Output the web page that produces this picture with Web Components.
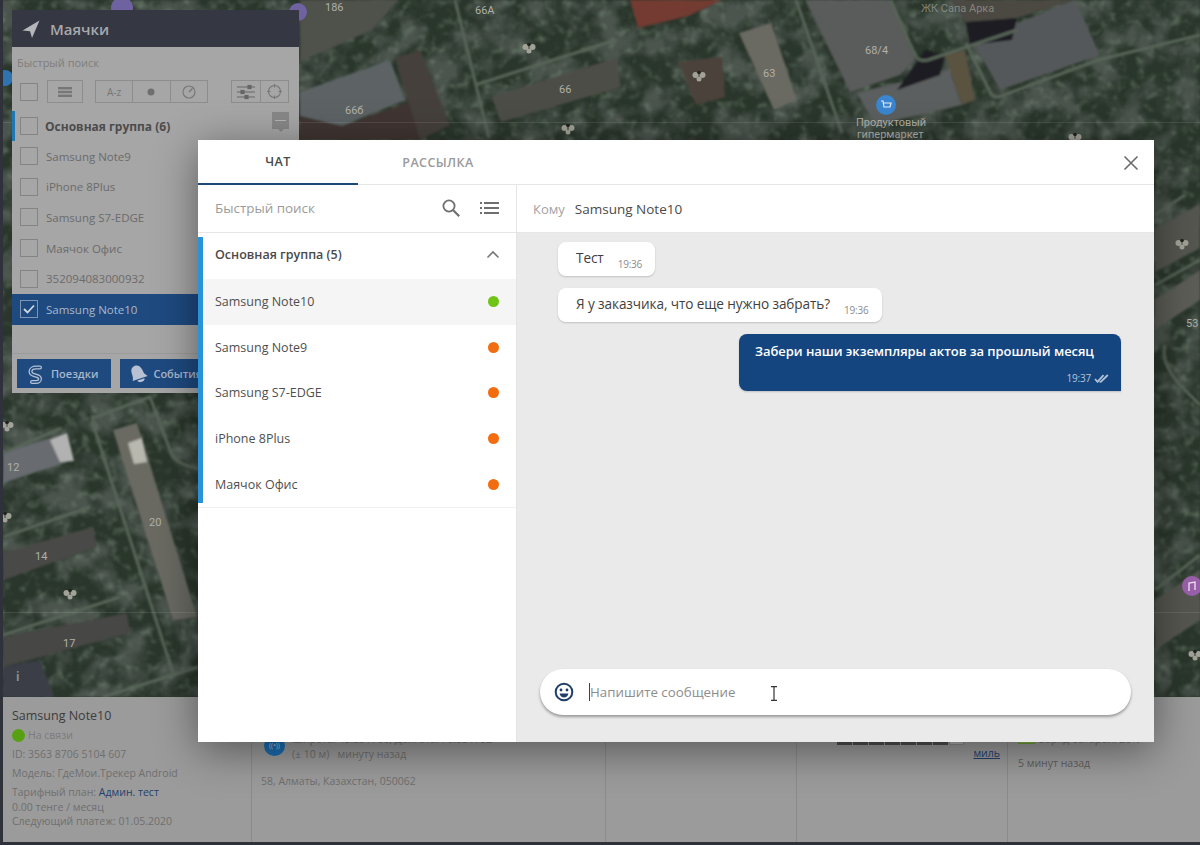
<!DOCTYPE html>
<html lang="ru">
<head>
<meta charset="utf-8">
<title>Маячки</title>
<style>
  html, body { margin: 0; padding: 0; height: 100%; background: #2f323b; overflow: hidden; }
  body { font-family: "Open Sans", "Liberation Sans", sans-serif; }
</style>
</head>
<body>
<tracker-app>
  <map-view slot="map"></map-view>
  <beacon-panel slot="map"></beacon-panel>
  <info-bar slot="info"></info-bar>
  <chat-dialog slot="dialog"></chat-dialog>
</tracker-app>

<script>
// shared icon strokes
const ICONS = {
  search: '<svg width="20" height="20" viewBox="0 0 20 20" fill="none" stroke="#6f6f6f" stroke-width="1.8"><circle cx="8" cy="8" r="5.6"/><path d="M12.2 12.2l6 6" stroke-width="2.2"/></svg>',
  list: '<svg width="20" height="14" viewBox="0 0 20 14" fill="#6f6f6f"><rect x="0" y="1" width="2" height="2"/><rect x="4" y="1" width="15" height="2"/><rect x="0" y="6" width="2" height="2"/><rect x="4" y="6" width="15" height="2"/><rect x="0" y="11" width="2" height="2"/><rect x="4" y="11" width="15" height="2"/></svg>',
  chevron: '<svg width="14" height="9" viewBox="0 0 14 9" fill="none" stroke="#777" stroke-width="1.6"><path d="M1.5 7.5L7 2l5.500 5.500"/></svg>',
  close: '<svg width="16" height="16" viewBox="0 0 16 16" fill="none" stroke="#6a6a6a" stroke-width="1.6"><path d="M1.500 1.500l13 13M14.500 1.500l-13 13"/></svg>',
  smile: '<svg width="20" height="20" viewBox="0 0 20 20"><circle cx="10" cy="10" r="8.300" fill="none" stroke="#1f3f68" stroke-width="2"/><circle cx="7" cy="8" r="1.400" fill="#1f3f68"/><circle cx="13" cy="8" r="1.400" fill="#1f3f68"/><path d="M5.600 11.500h8.800c-.5 2.600-2.300 4-4.400 4s-3.900-1.400-4.400-4z" fill="#1f3f68"/></svg>',
  ticks: '<svg width="15" height="9" viewBox="0 0 15 9" fill="none" stroke="#b0c1d8" stroke-width="1.800"><path d="M1 5l2.500 2.800L9.500 1.200"/><path d="M5.500 7.800L7 7.600 13.800 1"/></svg>'
};

class MapView extends HTMLElement {
  constructor() {
    super();
    this.attachShadow({ mode: 'open' });
    // satellite picture: a free canvas, so plain svg coordinates
    const marks = [[529,47],[699,75],[568,128],[7,425],[70,593],[1182,243],[1195,654],[1075,137],[5,516]];
    const marker = marks.map(m => `<g transform="translate(${m[0]},${m[1]})" fill="#a2a298"><circle cx="-3.500" cy="0" r="3"/><circle cx="3.500" cy="0" r="3"/><circle cx="0" cy="4" r="2.500"/><circle cx="0" cy="-2.500" r="1.800" fill="#20241f"/></g>`).join('');
    this.shadowRoot.innerHTML = `
      <style>
        :host { display: block; position: absolute; inset: 0; }
        svg { display: block; width: 100%; height: 100%; }
        text { font-family: Roboto, "Liberation Sans", sans-serif; font-size: 11px; fill: #b0b0a8; }
      </style>
      <svg viewBox="0 0 1197 697" preserveAspectRatio="none">
        <defs>
          <filter id="trees" x="0" y="0" width="100%" height="100%">
            <feTurbulence type="fractalNoise" baseFrequency=".035" numOctaves="4" seed="11"/>
            <feColorMatrix values="0 0 0 0 .07  0 0 0 0 .09  0 0 0 0 .075  3.500 0 0 0 -1.400"/>
            <feGaussianBlur stdDeviation="1"/>
          </filter>
          <filter id="leaves" x="0" y="0" width="100%" height="100%">
            <feTurbulence type="fractalNoise" baseFrequency=".11" numOctaves="3" seed="4"/>
            <feColorMatrix values="0 0 0 0 .21  0 0 0 0 .28  0 0 0 0 .21  0 1.500 0 0 -.800"/>
            <feGaussianBlur stdDeviation=".9"/>
          </filter>
          <filter id="blur"><feGaussianBlur stdDeviation=".8"/></filter>
        </defs>
        <g transform="translate(-3,0)">
          <rect x="0" width="1200" height="697" fill="#2a362b"/>
          <rect x="0" width="1200" height="697" filter="url(#trees)"/>
          <rect x="0" width="1200" height="697" filter="url(#leaves)"/>
          <g filter="url(#blur)">
            <!-- blocks and roofs -->
            <polygon points="300,0 398,0 372,30 300,62" fill="#50514c"/>
            <polygon points="630,0 722,0 688,16 638,28" fill="#733a31"/>
            <polygon points="300,92 390,60 405,100 342,126 300,116" fill="#5d6365"/>
            <polygon points="300,116 342,126 415,100 420,140 300,140" fill="#403530"/>
            <polygon points="395,58 420,50 450,125 420,140" fill="#44403a"/>
            <polygon points="492,97 616,58 621,87 501,122" fill="#4e4d47"/>
            <polygon points="679,62 722,57 725,97 696,105" fill="#4c423b"/>
            <polygon points="739,33 771,23 797,100 774,110" fill="#6b6b63"/>
            <polygon points="805,0 891,0 915,60 900,75 850,92" fill="#5a5c5c"/>
            <polygon points="857,93 949,70 962,105 875,125" fill="#5c5e5e"/>
            <polygon points="1000,30 1075,0 1100,55 1000,90 975,45" fill="#55585a"/>
            <polygon points="950,0 1075,0 1017,18 966,22" fill="#4c4942"/>
            <polygon points="945,55 965,50 975,100 962,105" fill="#5a5240"/>
            <polygon points="897,90 925,50 945,55 940,75" fill="#1b1f22"/>
            <polygon points="966,22 1017,18 1012,40 970,45" fill="#1b1f22"/>
            <polygon points="1155,229 1200,204 1200,248 1155,272" fill="#54564f"/>
            <polygon points="1155,300 1200,270 1200,300 1155,330" fill="#5c5d56"/>
            <polygon points="1155,600 1200,570 1200,620 1155,650" fill="#55564f"/>
            <polygon points="3,453 67,433 73,460 3,483" fill="#676c71"/>
            <polygon points="50,440 67,433 74,461 60,462" fill="#b2b2b2"/>
            <polygon points="113,430 137,423 197,617 173,620" fill="#6a6b64"/>
            <polygon points="128,443 142,438 147,462 134,464" fill="#b8b8af"/>
            <polygon points="3,553 93,527 97,547 3,580" fill="#484846"/>
            <polygon points="3,637 127,613 130,633 3,667" fill="#464644"/>
            <polygon points="3,667 40,660 54,697 3,697" fill="#3a3e46"/>
            <!-- roads -->
            <g fill="none" stroke="#596558" stroke-width="3">
              <path d="M455 0L489 138"/>
              <path d="M475 85L616 40"/>
              <path d="M796 0L842 133"/>
              <path d="M891 0L915 55Q918 62 928 60L1017 30"/>
              <path d="M966 43L990 92Q994 100 1004 95L1098 60 1200 35"/>
              <path d="M93 415Q92 418 95 430L173 673"/>
              <path d="M93 418L150 397 170 450Q175 465 197 468"/>
              <path d="M3 453L62 428"/>
              <path d="M3 537L90 507"/>
              <path d="M3 635L120 597"/>
              <path d="M103 697L198 667"/>
              <path d="M1155 215L1185 195"/>
              <path d="M1155 285L1200 260"/>
              <path d="M1155 590L1200 555"/>
              <path d="M1165 345Q1160 362 1180 385L1200 405"/>
            </g>
          </g>
          <g stroke="#ffffff" stroke-opacity=".1"><path d="M0 122.500H1200M0 612.500H1200"/></g>
          ${marker}
          <circle cx="122" cy="8" r="11" fill="#6f62a0"/>
          <circle cx="298" cy="12" r="9" fill="#6f62a0"/>
          <circle cx="5" cy="78" r="8" fill="#2f74b0"/>
          <circle cx="886" cy="105" r="10" fill="#3a86d0"/>
          <path d="M881 101h2l1 6h6l1-4h-7" fill="none" stroke="#e6eef8" stroke-width="1.200"/>
          <circle cx="1192" cy="586" r="10" fill="#9a60ab"/>
          <path d="M1189 591v-8l6-1v8" fill="none" stroke="#eedcf2" stroke-width="1.400"/>
          <text x="325" y="11">186</text>
          <text x="475" y="14">66А</text>
          <text x="559" y="93">66</text>
          <text x="345" y="114">66б</text>
          <text x="763" y="77">63</text>
          <text x="865" y="54">68/4</text>
          <text x="921" y="12" fill-opacity=".6">ЖК Сапа Арка</text>
          <text x="856" y="126">Продуктовый</text>
          <text x="857" y="138">гипермаркет</text>
          <text x="7" y="471">12</text>
          <text x="35" y="560">14</text>
          <text x="63" y="647">17</text>
          <text x="149" y="526">20</text>
          <text x="1186" y="327">53</text>
          <text x="16" y="681" fill-opacity=".7" style="font-weight:700;font-size:13px">i</text>
        </g>
      </svg>
    `;
  }
}
customElements.define('map-view', MapView);

class BeaconRow extends HTMLElement {
  constructor() {
    super();
    this.attachShadow({ mode: 'open' });
    this.shadowRoot.innerHTML = `
      <style>
        :host { display: flex; align-items: center; height: 30.600px; padding-left: 8px; color: #6b6b6b; font-size: 11.500px; }
        :host([group]) { color: #4c4c4c; font-weight: 700; font-size: 12px; box-shadow: inset 3px 0 #1f78b4; height: 30px; }
        :host([selected]) { background: #1e4a80; color: #a9b8cc; }
        .box { width: 16px; height: 16px; border: 1px solid #848484; margin-right: 8px; flex: none; display: flex; align-items: center; justify-content: center; }
        :host([group]) .box { margin-right: 7px; }
        :host([selected]) .box { border-color: #7f95b5; }
      </style>
      <span class="box"></span><slot></slot>
    `;
    if (this.hasAttribute('selected')) {
      this.shadowRoot.querySelector('.box').innerHTML = '<svg width="12" height="10" viewBox="0 0 12 10" fill="none" stroke="#d0d8e2" stroke-width="1.800"><path d="M1 5l3.500 3.500L11 1.500"/></svg>';
    }
  }
}
customElements.define('beacon-row', BeaconRow);

class BeaconPanel extends HTMLElement {
  constructor() {
    super();
    this.attachShadow({ mode: 'open' });
    this.shadowRoot.innerHTML = `
      <style>
        :host { display: flex; flex-direction: column; position: absolute; left: 9px; top: 10px; width: 287px; height: 383px; background: #a6a6a6; color: #6b6b6b; font-family: "Open Sans", "Liberation Sans", sans-serif; }
        header { display: flex; align-items: center; gap: 10px; height: 37px; padding-left: 10px; background: #353842; color: #a8a9ad; font-size: 15px; font-weight: 600; flex: none; }
        .search { padding: 8px 5px 0; height: 25px; font-size: 11px; color: #7e7e7e; box-sizing: border-box; flex: none; }
        .tools { display: flex; align-items: center; height: 25px; padding: 7px 10px 0 8px; flex: none; }
        .check { width: 16px; height: 16px; border: 1px solid #848484; margin-right: 9px; }
        .grp { display: flex; height: 21px; border: 1px solid #8d8d8d; }
        .grp span { display: flex; align-items: center; justify-content: center; width: 36.300px; border-left: 1px solid #8d8d8d; font-size: 10px; color: #777; }
        .grp span:first-child { border-left: 0; }
        .rows { flex: 1; padding-top: 7px; position: relative; }
        .tag { position: absolute; right: 10px; top: 8px; width: 17px; height: 17px; background: #888; }
        .tag::after { content: ""; position: absolute; left: 6px; top: 17px; border: 3px solid transparent; border-top-color: #888; }
        .tag::before { content: ""; position: absolute; left: 3px; right: 3px; top: 8px; height: 1px; background: #b5b5b5; }
        footer { display: flex; gap: 9px; height: 40px; padding: 5px 5px 0; box-sizing: border-box; border-top: 1px solid #9b9b9b; flex: none; overflow: hidden; }
        .btn { display: flex; align-items: center; gap: 5px; height: 29px; padding: 0 13px 0 9px; background: #1e4a80; color: #a9b8cc; font-size: 11px; font-weight: 600; white-space: nowrap; flex: none; }
        .bell { transform: rotate(-18deg); }
      </style>
      <header>
        <svg width="18" height="18" viewBox="0 0 18 18" fill="#b5b6ba"><path d="M17.500 .5L.5 10.500l7.500 0.800L10 18z"/></svg>
        Маячки
      </header>
      <div class="search">Быстрый поиск</div>
      <div class="tools">
        <span class="check"></span>
        <div class="grp"><span style="width:34px"><svg width="14" height="10" viewBox="0 0 14 10" fill="#777"><rect width="14" height="2.400"/><rect y="3.800" width="14" height="2.400"/><rect y="7.600" width="14" height="2.400"/></svg></span></div>
        <div class="grp" style="margin-left:12px"><span>A-z</span><span><svg width="8" height="8"><circle cx="4" cy="4" r="3.500" fill="#6f6f6f"/></svg></span><span><svg width="14" height="14" viewBox="0 0 14 14" fill="none" stroke="#777" stroke-width="1.100"><circle cx="7" cy="7" r="6"/><path d="M7 7l3.500-3.500" stroke-width="1.500"/></svg></span></div>
        <div class="grp" style="margin-left:auto"><span style="width:28px"><svg width="18" height="16" viewBox="0 0 18 16" fill="none" stroke="#666" stroke-width="1.200"><path d="M0 3h18M0 8h18M0 13h18"/><rect x="11" y="1.500" width="3" height="3" fill="#666"/><rect x="4" y="6.500" width="3" height="3" fill="#666"/><rect x="8" y="11.500" width="3" height="3" fill="#666"/></svg></span><span style="width:27px"><svg width="15" height="15" viewBox="0 0 15 15" fill="none" stroke="#777" stroke-width="1.100"><circle cx="7.500" cy="7.500" r="6"/><path d="M7.500 0v3.500M7.500 11.500V15M0 7.500h3.500M11.500 7.500H15"/></svg></span></div>
      </div>
      <div class="rows">
        <beacon-row group>Основная группа (6)</beacon-row>
        <span class="tag"></span>
        <beacon-row>Samsung Note9</beacon-row>
        <beacon-row>iPhone 8Plus</beacon-row>
        <beacon-row>Samsung S7-EDGE</beacon-row>
        <beacon-row>Маячок Офис</beacon-row>
        <beacon-row>352094083000932</beacon-row>
        <beacon-row selected>Samsung Note10</beacon-row>
      </div>
      <footer>
        <div class="btn"><svg width="20" height="20" viewBox="0 0 20 20" fill="none" stroke-linecap="round"><path d="M14 3.500h-4C7 3.500 4.500 5 4.500 7.500S7 11 9.500 11.500s4.500 1.500 4.500 3.500-2 3-4 3H6" stroke="#b6c2d3" stroke-width="4"/><path d="M14 3.500h-4C7 3.500 4.500 5 4.500 7.500S7 11 9.500 11.500s4.500 1.500 4.500 3.500-2 3-4 3H6" stroke="#1e4a80" stroke-width="1.500"/></svg>Поездки</div>
        <div class="btn"><svg class="bell" width="19" height="19" viewBox="0 0 18 18" fill="#b6c2d3"><path d="M8 1c3 0 5 2.500 5.500 5.500l.5 4 2.500 3.500H1.500C3 12 3 10 3 6.500 3 3 5.500 1 8 1z"/><path d="M6 15h7c0 1.500-1.500 2.500-3.500 2.500S6 16.500 6 15z"/></svg>События</div>
      </footer>
    `;
  }
}
customElements.define('beacon-panel', BeaconPanel);

class InfoBar extends HTMLElement {
  constructor() {
    super();
    this.attachShadow({ mode: 'open' });
    let cells = '';
    for (let i = 0; i < 7; i++) {
      cells += '<i></i>';
    }
    this.shadowRoot.innerHTML = `
      <style>
        :host { display: grid; grid-template-columns: 249px 354px 191px 211px 1fr; height: 145px; background: #9b9b9b; color: #6f6f6f; font-size: 10.500px; line-height: 15px; font-family: "Open Sans", "Liberation Sans", sans-serif; overflow: hidden; }
        section { border-right: 1px solid #8b8b8b; box-sizing: border-box; padding: 0; position: relative; min-width: 0; }
        section:last-child { border-right: 0; }
        .device { padding: 11px 0 0 9px; }
        .name { font-size: 12.500px; color: #3c3c3c; line-height: 16px; margin-bottom: 4px; }
        .status { display: flex; align-items: center; gap: 3px; height: 15px; margin-bottom: 4px; color: #7b7b7b; }
        .dot { width: 13px; height: 13px; border-radius: 50%; background: #56a012; }
        .line { margin-bottom: 4px; }
        .tight { line-height: 14.500px; margin: 0; }
        a { color: #23406c; }
        .place { padding: 35px 0 0 12px; }
        .pos { display: flex; gap: 7px; }
        .round { width: 21px; height: 21px; margin-top: 3px; border-radius: 50%; background: #1a6db2; color: #b8d0e6; font-size: 7px; display: flex; align-items: center; justify-content: center; flex: none; }
        .addr { margin: 12px 0 0 -3px; }
        .bars { display: flex; gap: 1px; position: absolute; left: 40px; top: 41px; }
        .bars i { width: 15px; height: 7px; background: #4e4e4e; }
        .bars i.off { background: #aeaeae; box-sizing: border-box; border: 1px solid #8a8a8a; }
        .mile a { position: absolute; right: 7px; top: 49px; text-decoration: underline; }
        .batt { padding: 35px 0 0 10px; }
        .batt div { display: flex; align-items: center; gap: 4px; }
        .batt b { width: 15px; height: 6px; border: 1px solid #6f9a3a; background: #88b04b; display: block; }
        .batt p { margin: 9px 0 0; color: #5f5f5f; }
        .sign { position: absolute; left: 12px; top: 40px; width: 12px; height: 5px; background: #88a060; }
      </style>
      <section class="device">
        <div class="name">Samsung Note10</div>
        <div class="status"><span class="dot"></span>На связи</div>
        <div class="line">ID: 3563 8706 5104 607</div>
        <div class="line">Модель: ГдеМои.Трекер Android</div>
        <div class="tight">Тарифный план: <a>Админ. тест</a></div>
        <div class="tight">0.00 тенге / месяц</div>
        <div class="tight">Следующий платеж: 01.05.2020</div>
      </section>
      <section class="place">
        <div class="pos">
          <span class="round">((•))</span>
          <div>Широта: 43.291766, Долгота: 76.851752<br>(± 10 м) &nbsp; минуту назад</div>
        </div>
        <div class="addr">58, Алматы, Казахстан, 050062</div>
      </section>
      <section><span class="sign"></span></section>
      <section class="mile"><div class="bars">${cells}<i class="off"></i></div><a>миль</a></section>
      <section class="batt">
        <div><b></b>Заряд батареи: 26%</div>
        <p>5 минут назад</p>
      </section>
    `;
  }
}
customElements.define('info-bar', InfoBar);

class ContactRow extends HTMLElement {
  constructor() {
    super();
    this.attachShadow({ mode: 'open' });
    const color = this.getAttribute('status') === 'on' ? '#6fc414' : '#f26d0f';
    this.shadowRoot.innerHTML = `
      <style>
        :host { display: flex; align-items: center; justify-content: space-between; height: 45.600px; padding: 0 17px; font-size: 12.500px; color: #4f4f4f; }
        :host([active]) { background: #f5f5f5; }
        i { width: 11px; height: 11px; border-radius: 50%; background: ${color}; }
      </style>
      <slot></slot><i></i>
    `;
  }
}
customElements.define('contact-row', ContactRow);

class ChatBubble extends HTMLElement {
  constructor() {
    super();
    this.attachShadow({ mode: 'open' });
    this.shadowRoot.innerHTML = `
      <style>
        :host { display: flex; align-items: flex-end; align-self: flex-start; box-sizing: border-box; height: 34px; padding: 0 13px 0 18px; gap: 14px; background: #fff; border-radius: 8px; box-shadow: 0 1px 2px rgba(0,0,0,.18); color: #3f3f3f; font-size: 13.600px; line-height: 34px; letter-spacing: -.1px; margin-left: 41px; white-space: nowrap; }
        .text { display: block; margin-top: -1px; height: 34px; position: relative; top: -1px; }
        .time { font-size: 10px; line-height: 11px; padding-bottom: 6px; color: #8c8c8c; letter-spacing: -.2px; }
        :host([own]) { display: block; align-self: flex-end; width: 382px; height: 57px; padding: 0 12px 0 16px; margin: 0 33px 0 0; background: #14457f; color: #fff; font-weight: 600; font-size: 13px; line-height: 34px; letter-spacing: -.05px; border-bottom-right-radius: 0; }
        :host([own]) .text { margin: 0; top: 0; }
        :host([own]) .time { display: flex; justify-content: flex-end; align-items: center; gap: 3px; color: #b5c5da; margin-top: 5px; padding: 0; font-weight: 400; }
      </style>
      <span class="text"><slot></slot></span><span class="time"></span>
    `;
    this.shadowRoot.querySelector('.time').innerHTML = this.getAttribute('time') + (this.hasAttribute('own') ? ICONS.ticks : '');
  }
}
customElements.define('chat-bubble', ChatBubble);

class ChatDialog extends HTMLElement {
  constructor() {
    super();
    this.attachShadow({ mode: 'open' });
    this.shadowRoot.innerHTML = `
      <style>
        :host { display: grid; grid-template-columns: 319px 1fr; grid-template-rows: 45px 1fr; position: absolute; left: 198px; top: 140px; width: 956px; height: 602px; background: #fff; box-shadow: 0 8px 40px rgba(0,0,0,.45); font-family: "Open Sans", "Liberation Sans", sans-serif; overflow: hidden; }
        .tabs { grid-column: 1 / 3; display: flex; align-items: stretch; border-bottom: 1px solid #e6e6e6; position: relative; }
        .tab { width: 160px; display: flex; align-items: center; justify-content: center; font-size: 12.500px; font-weight: 600; color: #9a9a9a; letter-spacing: .4px; box-sizing: border-box; margin-bottom: -1px; }
        .tab.on { color: #4a4a4a; border-bottom: 2px solid #1f4a78; }
        .x { position: absolute; right: 15px; top: 15px; display: flex; }
        .left { border-right: 1px solid #e4e4e4; display: flex; flex-direction: column; min-height: 0; }
        .search { display: flex; align-items: center; height: 48px; padding: 0 16px 2px 17px; box-sizing: border-box; border-bottom: 1px solid #e6e6e6; font-size: 13.400px; color: #9b9b9b; flex: none; }
        .search span { flex: 1; }
        .search svg { display: block; }
        .search .l { margin-left: 19px; }
        .group { margin-top: 4px; position: relative; }
        .group::before { content: ""; position: absolute; left: 0; top: 0; bottom: 4px; width: 5px; background: #2a93d8; z-index: 1; }
        .group .head { display: flex; align-items: center; justify-content: space-between; box-sizing: border-box; height: 42px; padding: 0 16px 8px 17px; font-size: 12.500px; font-weight: 600; color: #4a4a4a; }
        .end { border-top: 1px solid #f0f0f0; }
        .right { display: flex; flex-direction: column; background: #eaeaea; min-height: 0; }
        .to { display: flex; align-items: center; gap: 10px; height: 48px; padding-left: 16px; background: #fff; border-bottom: 1px solid #e6e6e6; box-sizing: border-box; font-size: 13.500px; color: #4a4a4a; flex: none; }
        .to em { font-style: normal; color: #a2a2a2; font-size: 13px; }
        .log { flex: 1; display: flex; flex-direction: column; gap: 12px; padding-top: 9px; min-height: 0; }
        .compose { display: flex; align-items: center; height: 46px; margin: 0 23px 27px 23px; padding-left: 14px; background: #fff; border-radius: 23px; box-shadow: 0 2px 3px rgba(0,0,0,.35); font-size: 13.300px; color: #8d8d8d; position: relative; }
        .compose svg { flex: none; }
        .caret { width: 1px; height: 18px; background: #1f4a78; margin: 0 0 0 15px; }
        .cursor { position: absolute; left: 230px; top: 17px; display: flex; }
      </style>
      <div class="tabs">
        <div class="tab on">ЧАТ</div>
        <div class="tab">РАССЫЛКА</div>
        <span class="x">${ICONS.close}</span>
      </div>
      <div class="left">
        <div class="search"><span>Быстрый поиск</span>${ICONS.search}<span class="l" style="flex:none">${ICONS.list}</span></div>
        <div class="group">
          <div class="head">Основная группа (5) ${ICONS.chevron}</div>
          <contact-row status="on" active>Samsung Note10</contact-row>
          <contact-row status="off">Samsung Note9</contact-row>
          <contact-row status="off">Samsung S7-EDGE</contact-row>
          <contact-row status="off">iPhone 8Plus</contact-row>
          <contact-row status="off">Маячок Офис</contact-row>
        </div>
        <div class="end"></div>
      </div>
      <div class="right">
        <div class="to"><em>Кому</em>Samsung Note10</div>
        <div class="log">
          <chat-bubble time="19:36">Тест</chat-bubble>
          <chat-bubble time="19:36">Я у заказчика, что еще нужно забрать?</chat-bubble>
          <chat-bubble own time="19:37">Забери наши экземпляры актов за прошлый месяц</chat-bubble>
        </div>
        <div class="compose">
          ${ICONS.smile}<span class="caret"></span>Напишите сообщение
          <span class="cursor"><svg width="8" height="15" viewBox="0 0 8 15" fill="none" stroke="#333" stroke-width="1.200"><path d="M1 .7h6M1 14.300h6M4 .7v13.600"/></svg></span>
        </div>
      </div>
    `;
  }
}
customElements.define('chat-dialog', ChatDialog);

class TrackerApp extends HTMLElement {
  constructor() {
    super();
    this.attachShadow({ mode: 'open' });
    this.shadowRoot.innerHTML = `
      <style>
        :host { display: block; position: relative; width: 1200px; height: 845px; background: #2f323b; overflow: hidden; }
        .page { display: flex; flex-direction: column; height: 100%; padding-left: 3px; box-sizing: border-box; }
        .map { position: relative; height: 697px; flex: none; overflow: hidden; }
      </style>
      <div class="page">
        <div class="map"><slot name="map"></slot></div>
        <slot name="info"></slot>
      </div>
      <slot name="dialog"></slot>
    `;
  }
}
customElements.define('tracker-app', TrackerApp);
</script>
</body>
</html>
